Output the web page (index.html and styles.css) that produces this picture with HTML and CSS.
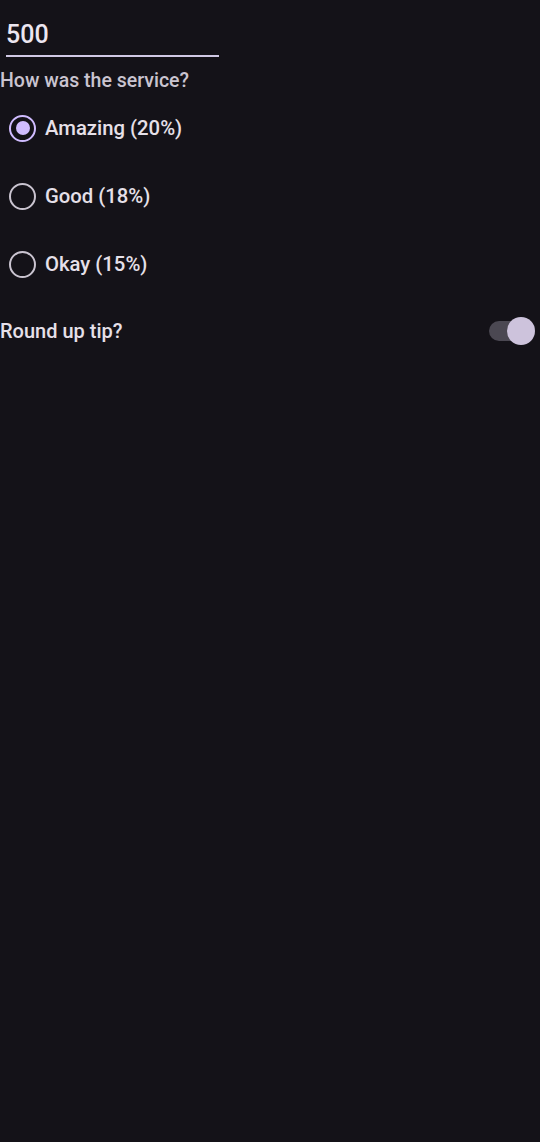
FILE: index.html
```html
<!DOCTYPE html>
<html>
<head>
<meta charset="utf-8">
<link rel="stylesheet" href="styles.css">
</head>
<body>
<div class="screen">
  <div class="field"><span class="value">500</span></div>
  <div class="question">How was the service?</div>
  <div class="radios">
    <div class="radio-row"><span class="radio checked"><span class="dot"></span></span><span class="radio-label">Amazing (20%)</span></div>
    <div class="radio-row"><span class="radio"></span><span class="radio-label">Good (18%)</span></div>
    <div class="radio-row"><span class="radio"></span><span class="radio-label">Okay (15%)</span></div>
  </div>
  <div class="switch-row">
    <span class="switch-label">Round up tip?</span>
    <span class="switch"><span class="track"></span><span class="thumb"></span></span>
  </div>
</div>
</body>
</html>
```
FILE: styles.css
```css
html, body {
  margin: 0;
  padding: 0;
  background: #141218;
}
body {
  font-family: Roboto, "Noto Sans", sans-serif;
  color: #e6e0e9;
  width: 540px;
  height: 1142px;
}
.screen {
  display: flex;
  flex-direction: column;
}
.field {
  margin-left: 6px;
  width: 213px;
  height: 55px;
  border-bottom: 2px solid #d0c8e4;
  display: flex;
  align-items: flex-end;
  box-sizing: content-box;
}
.value {
  font-size: 25px;
  font-weight: 500;
  line-height: 28px;
  padding-bottom: 6px;
  color: #ece6f0;
}
.question {
  font-size: 19.5px;
  font-weight: 500;
  color: #cac4d0;
  line-height: 24px;
  margin-top: 12px;
}
.radios {
  display: flex;
  flex-direction: column;
  margin-top: 1px;
}
.radio-row {
  height: 68px;
  display: flex;
  align-items: center;
}
.radio {
  width: 27px;
  height: 27px;
  box-sizing: border-box;
  border: 2.5px solid #cac4d0;
  border-radius: 50%;
  margin-left: 9px;
  margin-right: 9px;
  display: flex;
  align-items: center;
  justify-content: center;
}
.radio.checked {
  border-color: #d0bcff;
}
.dot {
  width: 14px;
  height: 14px;
  border-radius: 50%;
  background: #d0bcff;
}
.radio-label {
  font-size: 20.3px;
  font-weight: 500;
  color: #e6e0e9;
}
.switch-row {
  height: 68px;
  display: flex;
  align-items: center;
  justify-content: space-between;
  margin-top: -1px;
}
.switch-label {
  font-size: 20px;
  font-weight: 500;
  color: #e6e0e9;
}
.switch {
  position: relative;
  width: 46px;
  height: 30px;
  margin-right: 5px;
}
.track {
  position: absolute;
  left: 0;
  top: 5px;
  width: 42px;
  height: 20px;
  border-radius: 10px;
  background: #4b4852;
}
.thumb {
  position: absolute;
  right: 0;
  top: 1px;
  width: 28px;
  height: 28px;
  border-radius: 50%;
  background: #cdc3dc;
}
```
